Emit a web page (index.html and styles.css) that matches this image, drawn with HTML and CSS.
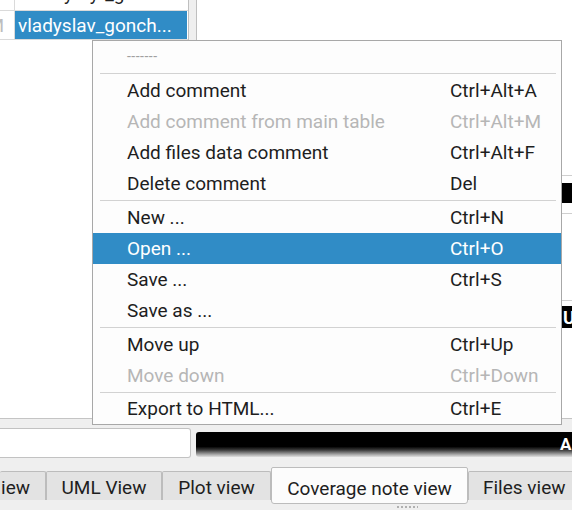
FILE: index.html
```html
<!DOCTYPE html>
<html>
<head>
<meta charset="utf-8">
<link rel="stylesheet" href="styles.css">
</head>
<body>
<div class="window">
  <div class="top">
    <div class="table">
      <div class="row first">
        <div class="c0"></div>
        <div class="c1">volodymyr_gonch...</div>
      </div>
      <div class="row">
        <div class="c0">AM</div>
        <div class="c1 sel">vladyslav_gonch...</div>
      </div>
    </div>
    <div class="splitter"></div>
    <div class="panel">
      <div class="pleft"></div>
      <div class="pright">
        <div class="gap g175"></div>
        <div class="hline"></div>
        <div class="gap g7"></div>
        <div class="blk b20"></div>
        <div class="gap g10"></div>
        <div class="hline"></div>
        <div class="gap g86"></div>
        <div class="hline"></div>
        <div class="gap g6"></div>
        <div class="blk b21">U</div>
      </div>
    </div>
  </div>

  <div class="bottombar">
    <div class="input"></div>
    <div class="progress"><span class="ptext">A</span></div>
  </div>

  <div class="tabs">
    <div class="tab t1">iew</div>
    <div class="tab t2">UML View</div>
    <div class="tab t3">Plot view</div>
    <div class="tab t4 active">Coverage note view</div>
    <div class="tab t5">Files view</div>
  </div>
  <div class="handlerow"><div class="handle"></div></div>

  <div class="menu">
    <div class="title">-------</div>
    <div class="sep"></div>
    <div class="item"><span>Add comment</span><span>Ctrl+Alt+A</span></div>
    <div class="item disabled"><span>Add comment from main table</span><span>Ctrl+Alt+M</span></div>
    <div class="item"><span>Add files data comment</span><span>Ctrl+Alt+F</span></div>
    <div class="item"><span>Delete comment</span><span>Del</span></div>
    <div class="sep"></div>
    <div class="item"><span>New ...</span><span>Ctrl+N</span></div>
    <div class="item hl"><span>Open ...</span><span>Ctrl+O</span></div>
    <div class="item"><span>Save ...</span><span>Ctrl+S</span></div>
    <div class="item"><span>Save as ...</span><span></span></div>
    <div class="sep"></div>
    <div class="item"><span>Move up</span><span>Ctrl+Up</span></div>
    <div class="item disabled"><span>Move down</span><span>Ctrl+Down</span></div>
    <div class="sep last"></div>
    <div class="item"><span>Export to HTML...</span><span>Ctrl+E</span></div>
  </div>
</div>
</body>
</html>
```
FILE: styles.css
```css
html, body {
  margin: 0;
  padding: 0;
  background: #efefef;
}
body {
  width: 572px;
  height: 510px;
  overflow: hidden;
  font-family: "Roboto", "Liberation Sans", sans-serif;
  font-size: 19px;
  color: #1e1e1e;
}
.window {
  position: relative;
  width: 572px;
  height: 510px;
  overflow: hidden;
  background: #efefef;
}

/* top area */
.top {
  display: flex;
  height: 419px;
}
.table {
  width: 189px;
  flex: none;
  box-sizing: border-box;
  background: #fff;
  border-right: 1px solid #bfbfbf;
  border-bottom: 1px solid #c4c4c4;
  overflow: hidden;
}
.row {
  display: flex;
  height: 29px;
  box-sizing: border-box;
  border-bottom: 1px solid #dadada;
  overflow: hidden;
}
.row.first {
  height: 11px;
  align-items: flex-end;
}
.c0 {
  width: 15px;
  flex: none;
  box-sizing: border-box;
  border-right: 1px solid #dadada;
  display: flex;
  justify-content: flex-end;
  align-items: center;
  padding-right: 10px;
  overflow: hidden;
  white-space: nowrap;
  color: #bdbdbd;
  height: 28px;
}
.c1 {
  padding-left: 3px;
  white-space: nowrap;
  overflow: hidden;
  height: 28px;
  display: flex;
  align-items: center;
  flex: none;
  width: 172px;
  box-sizing: border-box;
}
.row.first .c0 {
  height: 10px;
}
.row.first .c1 {
  height: 34px;
}
.c1.sel {
  background: #308cc6;
  color: #fff;
}
.splitter {
  width: 7px;
  flex: none;
}
.panel {
  flex: 1;
  display: flex;
  background: #fff;
  border-left: 1px solid #bfbfbf;
  border-bottom: 1px solid #c4c4c4;
}
.pleft {
  width: 365px;
  flex: none;
}
.pright {
  flex: 1;
  display: flex;
  flex-direction: column;
  overflow: hidden;
}
.gap.g175 { height: 175px; }
.gap.g7 { height: 7px; }
.gap.g10 { height: 10px; }
.gap.g86 { height: 86px; }
.gap.g6 { height: 5px; }
.hline {
  height: 1px;
  background: #cfcfcf;
}
.blk {
  background: #000;
  color: #fff;
  font-weight: bold;
  font-size: 18px;
  padding-left: 1px;
  white-space: nowrap;
  display: flex;
  align-items: center;
  overflow: hidden;
}
.blk.b20 { height: 20px; }
.blk.b21 { height: 22px; }

/* bottom input + bar */
.bottombar {
  display: flex;
  align-items: flex-start;
  margin-top: 9px;
  height: 30px;
}
.input {
  width: 191px;
  height: 30px;
  box-sizing: border-box;
  background: #fff;
  border: 1px solid #c2c2c2;
  border-left: none;
  border-radius: 0 3px 3px 0;
  flex: none;
}
.progress {
  margin-left: 5px;
  margin-top: 4px;
  flex: 1;
  height: 25px;
  border-radius: 3px 0 0 3px;
  background: linear-gradient(to bottom, #000 0%, #000 58%, #3a3a3a 72%, #a8a8a8 90%, #e0e0e0 100%);
  display: flex;
  align-items: center;
  padding-left: 364px;
  overflow: hidden;
  color: #fff;
  font-weight: bold;
  font-size: 17px;
  line-height: 18px;
  padding-bottom: 2px;
  box-sizing: border-box;
}

/* tabs */
.tabs {
  display: flex;
  align-items: flex-start;
  margin-top: 9px;
  height: 37px;
}
.tab {
  box-sizing: border-box;
  height: 29px;
  margin-top: 4px;
  background: #e3e3e3;
  border: 1px solid #bcbcbc;
  border-bottom: none;
  border-radius: 2px 2px 0 0;
  display: flex;
  align-items: center;
  justify-content: center;
  white-space: nowrap;
  flex: none;
  padding-top: 2px;
}
.tab.t1 { width: 46px; border-left: none; justify-content: flex-end; padding-right: 15px; }
.tab.t2 { width: 116px; }
.tab.t3 { width: 109px; }
.tab.t4 { width: 197px; }
.tab.t5 { width: 120px; justify-content: flex-start; padding-left: 14px; }
.tab.active {
  background: #fcfcfc;
  height: 37px;
  margin-top: 0;
  border-bottom: 1px solid #bcbcbc;
  border-radius: 2px 2px 3px 3px;
  padding-top: 5px;
}
.handlerow {
  padding-left: 397px;
  padding-top: 2px;
}
.handle {
  width: 21px;
  height: 2px;
  background: repeating-linear-gradient(to right, #b0b0b0 0 2px, transparent 2px 4px);
}

/* context menu */
.menu {
  position: absolute;
  left: 92px;
  top: 40px;
  width: 470px;
  box-sizing: border-box;
  background: #fdfdfd;
  border: 1px solid #a8a8a8;
}
.title {
  height: 31px;
  display: flex;
  align-items: center;
  padding-left: 34px;
  padding-bottom: 2px;
  box-sizing: border-box;
  color: #a0a0a0;
  font-size: 14px;
  letter-spacing: 0.5px;
}
.sep {
  height: 1px;
  background: #d2d2d2;
  margin: 1px 5px 1px 7px;
}
.sep.last {
  margin-bottom: 0;
}
.item {
  height: 31px;
  display: grid;
  grid-template-columns: 323px auto;
  align-items: center;
  padding-left: 34px;
  white-space: nowrap;
}
.item.disabled {
  color: #b6b6b6;
}
.item.hl {
  background: #308cc6;
  color: #fff;
}
```
